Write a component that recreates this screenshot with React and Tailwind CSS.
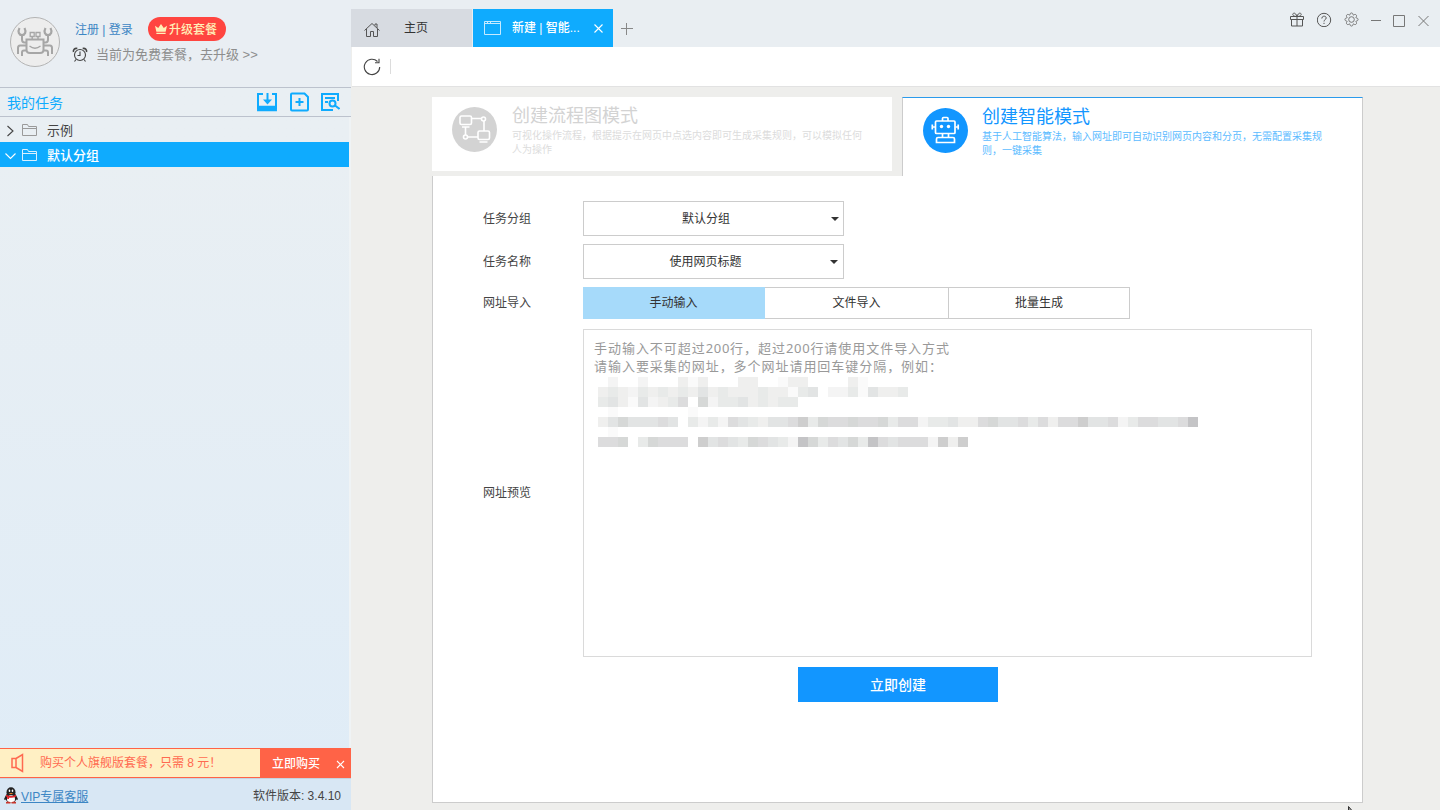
import React, { useState } from 'react';

const GREYS = {
  a: '#fafafa', b: '#f4f4f4', c: '#efefee', d: '#e8eae9', e: '#e2e4e4',
  f: '#dcdcdd', g: '#d6d8d7', h: '#cecece', i: '#c4c4c6',
};

// one letter per 10px block, a dot is an empty block
const MOSAIC = [
  '.b..b...cac...cc..acc....ca',
  'cdcbdcdcdcecdcccdccade.bbdaeccd',
  'decaebcdf.gbddecdcdd',
  '.a.......a',
  'cegeeefe.dbdbfedceefhdgffgffgdffbddeccfgeefdfcffheefbdffeefi',
  '.a',
  'ffg.dgfff.hefedgfedbigdfegdifefffbhch',
];

const TASKS = [
  { id: 1, name: '示例' },
  { id: 2, name: '默认分组' },
];

const SOURCES = [
  { name: '手动输入', width: 'w-[182px]' },
  { name: '文件导入', width: 'w-[184px]' },
  { name: '批量生成', width: 'w-[181px]' },
];

function Crab() {
  return (
    <svg width="50" height="50" viewBox="0 0 50 50" fill="none" stroke="#a6a6a6" strokeWidth="2">
      <circle cx="25" cy="25" r="24.5" fill="#ededed" stroke="#b3b3b3" strokeWidth="1" />
      <path d="M16.500 22.500h17v10q0 3.500-3.500 3.500h-10q-3.500 0-3.500-3.500z" />
      <path d="M16.500 25.500h-2q-2.500 0-2.500-3v-4M33.500 25.500h2q2.500 0 2.500-3v-4" />
      <path d="M9.500 11c-2 4-.5 7 2.500 7s4.500-3 2.500-7M35.500 11c-2 4-.5 7 2.500 7s4.500-3 2.500-7" strokeWidth="2.200" />
      <path d="M16.500 28.500H10q-2 0-2 2.500v6M16.500 33.500H14q-2 0-2 2v3.500M33.500 28.500H40q2 0 2 2.500v6M33.500 33.500H36q2 0 2 2v3.500" />
      <path d="M20.200 15.500h4v4h-4zM26 15.500h4v4h-4z" strokeWidth="1.300" />
      <path d="M22.200 19.500v3M28 19.500v3" strokeWidth="1.500" />
      <path d="M19.500 29q5.500 4.500 11 0" strokeWidth="1.300" />
    </svg>
  );
}

function AlarmIcon() {
  return (
    <svg width="16" height="16" viewBox="0 0 16 16" fill="none" stroke="#444" strokeWidth="1.1">
      <circle cx="8" cy="8" r="5.500" />
      <path d="M8 4.500v4H5.500M4 12.500l-1.500 2M12 12.500l1.500 2" />
      <path d="M1.500 5C.9 2.600 2.900.8 5.300 1.500M14.500 5c.6-2.400-1.400-4.200-3.800-3.500" strokeWidth="1.600" />
    </svg>
  );
}

function Folder({ color }) {
  return (
    <svg width="16" height="14" viewBox="0 0 16 14" fill="none" stroke={color}>
      <path d="M.5 12.500v-11h5l1 2h8v9zM.5 5.500h14" />
    </svg>
  );
}

function TaskToolbar() {
  return (
    <div className="flex items-center gap-3 text-[#0fabfe]">
      <svg width="21" height="20" viewBox="0 0 21 20" fill="none" stroke="currentColor" strokeWidth="2">
        <path d="M6 2H1v15M15 2h4v15" />
        <path d="M.800 14.500h18.400v4H.800z" fill="currentColor" strokeWidth="1.500" />
        <path d="M10.500 1v9" />
        <path d="M6 7.500h9l-4.500 5z" fill="currentColor" stroke="none" />
      </svg>
      <svg width="19" height="20" viewBox="0 0 19 20" fill="none" stroke="currentColor" strokeWidth="2">
        <path d="M2 1.500h12.500l3.500 3.500v12.500q0 1-1 1h-15q-1 0-1-1v-15q0-1 1-1zM9.500 6v8M5.500 10h8" />
      </svg>
      <svg width="19" height="20" viewBox="0 0 19 20" fill="none" stroke="currentColor" strokeWidth="2">
        <path d="M12 18H1V2h16v7M4 6h10M4 10h3" />
        <circle cx="11.500" cy="11.500" r="3" />
        <path d="M14 13.500l4.500 3.500" />
      </svg>
    </div>
  );
}

function Sidebar() {
  const [selected, setSelected] = useState(2);

  return (
    <aside className="flex w-[351px] shrink-0 flex-col bg-linear-to-b from-[#e9eff3] from-20% to-[#dfecf7]">
      <div className="flex h-[87px] gap-3 bg-[#e9eef3] pl-[10px] pt-[17px]">
        <Crab />
        <div>
          <div className="flex h-6 items-center text-[12px] text-[#3c86c4]">
            <span className="w-[76px] pl-[3px] pt-px">注册 | 登录</span>
            <span className="flex h-6 w-[78px] items-center gap-[2px] rounded-full bg-[#ff4540] pl-[7px] text-[12px] font-medium text-[#fff0b8]">
              <svg className="-mt-px" width="12" height="12" viewBox="0 0 13 12" fill="currentColor">
                <path d="M0 2.500l3.500 2.500L6.500.5l3 4.500L13 2.500 11.500 9h-10zM1.500 10h10v1.500h-10z" />
              </svg>
              <span className="pt-px">升级套餐</span>
            </span>
          </div>
          <div className="mt-[3px] flex items-center gap-2 text-[13px] leading-5 text-[#8d8d8d]">
            <AlarmIcon />
            <span className="whitespace-nowrap pt-px">当前为免费套餐，去升级 &gt;&gt;</span>
          </div>
        </div>
      </div>

      <div className="flex h-[30px] items-center justify-between border-y border-[#bcc2cd] pl-[7px] pr-[11px]">
        <span className="pt-[2px] text-[14px] text-[#0fabfe]">我的任务</span>
        <TaskToolbar />
      </div>

      <div className="flex-1 border-r-2 border-[#eff3f5]">
        {TASKS.map(task => (
          <div
            key={task.id}
            onClick={() => setSelected(task.id)}
            className={`flex h-[25px] items-center text-[13px] ${
              selected === task.id ? 'bg-[#0fabfe] font-medium text-white' : 'text-[#444]'
            }`}
          >
            <svg className="ml-[5px] mr-[5px] mt-[2px]" width="12" height="12" viewBox="0 0 12 12" fill="none" stroke="currentColor" strokeWidth="1.100">
              {selected === task.id ? <path d="M.5 3.500L5.500 8.500l5-5" /> : <path d="M2.500 1l5.500 5-5.500 5" />}
            </svg>
            <Folder color={selected === task.id ? '#d8f0ff' : '#9a9a9a'} />
            <span className="ml-[9px] pt-[2px]">{task.name}</span>
          </div>
        ))}
      </div>

      <div className="flex h-[30px] items-stretch border-y border-[#ff6347] bg-[#fff0c4] text-[12px]">
        <div className="flex w-[260px] items-center text-[#ff6a50]">
          <svg className="ml-[11px] mr-[16px]" width="13" height="20" viewBox="0 0 13 20" fill="none" stroke="currentColor" strokeWidth="1.500">
            <path d="M1 5.500h4v9H1zM5 5.500L11.500 1.500v17L5 14.500" />
          </svg>
          <span>购买个人旗舰版套餐，只需 8 元！</span>
        </div>
        <div className="flex flex-1 items-center justify-between bg-[#ff6347] pl-3 pr-[6px] font-medium text-white">
          <span className="pt-px">立即购买</span>
          <svg className="mt-[2px]" width="9" height="9" viewBox="0 0 9 9" stroke="currentColor" strokeWidth="1.100">
            <path d="M1 1l7 7M8 1L1 8" />
          </svg>
        </div>
      </div>

      <div className="flex h-8 items-center justify-between border-t border-[#c5d3e0] bg-[#d8e7f4] pl-1 pr-[10px] pt-[3px] text-[12px] text-[#444]">
        <div className="flex items-center gap-[3px]">
          <svg className="-mt-px" width="14" height="17" viewBox="0 0 14 17">
            <path d="M2.500 7.500L.2 11.500q0 2 1 1.500L3 11zM11.500 7.500l2.300 4q0 2-1 1.500L11 11z" fill="#222" />
            <ellipse cx="7" cy="10.500" rx="5.500" ry="5.500" fill="#222" />
            <ellipse cx="7" cy="5.200" rx="4.500" ry="5" fill="#222" />
            <ellipse cx="7" cy="12" rx="4" ry="3.800" fill="#fff" />
            <path d="M2.200 7.800q4.800 2.500 9.600 0l.3 1.700q-5 2.500-10.200 0zM3 9h2v3H3.300z" fill="#e1252b" />
            <ellipse cx="5.500" cy="3.800" rx=".8" ry="1.200" fill="#fff" />
            <ellipse cx="8.500" cy="3.800" rx=".8" ry="1.200" fill="#fff" />
            <path d="M4.500 6h5L7 7.300z" fill="#ee8322" />
            <path d="M2 15q2.500-1 4.500.3V16.500H2zM12 15q-2.500-1-4.500.3V16.500H12z" fill="#c9352b" />
          </svg>
          <span className="pt-px text-[#3c86c4] underline">VIP专属客服</span>
        </div>
        <span>软件版本: 3.4.10</span>
      </div>
    </aside>
  );
}

function TabBar() {
  return (
    <div className="flex h-[47px] items-start justify-between bg-[#e9eef2]">
      <div className="flex pt-[9px]">
        <div className="mr-px flex h-[38px] w-[121px] items-center bg-[#d7dbe1] text-[12px] text-[#333]">
          <svg className="ml-[13px] mr-[24px] mt-[3px]" width="16" height="16" viewBox="0 0 16 16" fill="none" stroke="#555">
            <path d="M.5 8.500L8 1.500l7.500 7M2.500 7v7.500h4v-5h3v5h4V7M11 3.500V2h2v4" />
          </svg>
          <span>主页</span>
        </div>
        <div className="flex h-[38px] w-[140px] items-center bg-[#0fabfe] text-[12px] font-medium text-white">
          <svg className="ml-[11px] mr-[11px]" width="17" height="14" viewBox="0 0 17 14" fill="none" stroke="#c5eaff">
            <path d="M.5.5h16v13H.5zM.5 2.500h16M3.500 1v2M6.500 1v2" />
          </svg>
          <span className="w-[82px] whitespace-nowrap">新建 | 智能...</span>
          <svg width="9" height="9" viewBox="0 0 9 9" stroke="currentColor" strokeWidth="1.100">
            <path d="M.5.5l8 8M8.500.5l-8 8" />
          </svg>
        </div>
        <svg className="ml-2 mt-[14px]" width="12" height="12" viewBox="0 0 12 12" stroke="#888">
          <path d="M0 5.500h12M5.500 0v12" />
        </svg>
      </div>

      <div className="flex items-center gap-3 pr-[9px] pt-3 text-[#555]">
        <svg width="15" height="15" viewBox="0 0 15 15" fill="none" stroke="currentColor">
          <path d="M.5 4.500h13v3H.5zM1.500 7.500h11v6.500h-11zM7 4.500v9.500M7 4.500C4.500 4.500 2 3.500 3 1.800s3.300 0 4 2.700c.7-2.700 3-4.400 4-2.700s-1.500 2.700-4 2.700" />
        </svg>
        <svg width="15" height="15" viewBox="0 0 15 15" fill="none" stroke="currentColor">
          <circle cx="7" cy="8" r="6.700" />
          <path d="M4.800 6.500c0-3 4.400-3 4.400-.5 0 1.700-2.200 1.500-2.200 3.500M7 10.800v1.200" />
        </svg>
        <svg width="15" height="15" viewBox="0 0 24 24" fill="none" stroke="#777" strokeWidth="1.600">
          <circle cx="12" cy="12" r="4.500" />
          <path d="M9.500 4.500C9.500.5 14.500.5 14.500 4.500L15.540 4.930C18.360 2.100 21.900 5.640 19.070 8.460L19.500 9.500C23.500 9.500 23.500 14.500 19.500 14.500L19.070 15.540C21.900 18.360 18.360 21.900 15.540 19.070L14.500 19.500C14.500 23.500 9.500 23.500 9.500 19.500L8.460 19.070C5.640 21.900 2.100 18.360 4.930 15.540L4.500 14.500C.5 14.500.5 9.500 4.500 9.500L4.930 8.460C2.100 5.640 5.640 2.100 8.460 4.930Z" />
        </svg>
        <svg width="10" height="15" viewBox="0 0 10 15" stroke="#777">
          <path d="M0 8.500h10" />
        </svg>
        <svg width="13" height="15" viewBox="0 0 13 15" fill="none" stroke="#777">
          <path d="M.5 3.500h11v11H.5z" />
        </svg>
        <svg width="13" height="15" viewBox="0 0 13 15" fill="none" stroke="#777">
          <path d="M.5 4l10 10M10.500 4L.5 14" />
        </svg>
      </div>
    </div>
  );
}

function FlowIcon() {
  return (
    <svg className="shrink-0" width="45" height="45" viewBox="0 0 45 45" fill="none" stroke="#fff" strokeWidth="1.600">
      <circle cx="22.500" cy="22.500" r="22.500" fill="#d3d3d3" stroke="none" />
      <rect x="8" y="9" width="11.500" height="8.500" rx="1.500" />
      <rect x="26" y="24" width="11.500" height="8.500" rx="1.500" />
      <circle cx="31.500" cy="12" r="2" />
      <circle cx="13.500" cy="30" r="2" />
      <path d="M19.500 11.500h10M32 14v10M13.500 20v8M15.500 30H26M10 20h7.500M27.500 35h8" />
    </svg>
  );
}

function RobotIcon() {
  return (
    <svg className="shrink-0" width="45" height="45" viewBox="0 0 45 45" fill="none" stroke="#fff" strokeWidth="1.700">
      <circle cx="22.500" cy="22.500" r="22.500" fill="#1296ff" stroke="none" />
      <rect x="12.500" y="13" width="19.500" height="12.500" rx="1" />
      <path d="M19.500 13v-2.500q0-1 1-1h3.500q1 0 1 1V13M9.300 16.500v5M12 19H9.300M35.200 16.500v5M32.500 19h2.700M19.500 26v3M25.500 26v3" />
      <path d="M13.500 34.500v-3.500q0-1.500 1.500-1.500h15q1.500 0 1.500 1.500v3.500z" />
      <circle cx="18.500" cy="18.500" r="1.700" fill="#fff" stroke="none" />
      <circle cx="25.500" cy="18.500" r="1.700" fill="#fff" stroke="none" />
    </svg>
  );
}

function Row({ label, children, className }) {
  return (
    <div className={`flex ${className}`}>
      <div className="flex w-[100px] items-center text-[12px] text-[#444]">{label}</div>
      {children}
    </div>
  );
}

function SelectBox({ value, arrowClass }) {
  return (
    <div className="flex h-[35px] w-[261px] items-center border border-[#ccc] text-[12px] text-[#333]">
      <span className="flex-1 pr-[3px] text-center">{value}</span>
      <svg className={arrowClass} width="8" height="4" viewBox="0 0 8 4" fill="#333">
        <path d="M0 0h8L4 4z" />
      </svg>
    </div>
  );
}

function UrlBox() {
  return (
    <div className="h-[328px] w-[729px] border border-[#dadada] pl-[10px] pt-[9px] font-['Noto_Sans','Noto_Sans_CJK_SC',sans-serif] text-[13px] leading-[18px] tracking-[0.96px] text-[#999]">
      <p>手动输入不可超过<span className="tracking-[0.7px]">200</span>行，超过<span className="tracking-[0.7px]">200</span>行请使用文件导入方式</p>
      <p>请输入要采集的网址，多个网址请用回车键分隔，例如：</p>
      <div className="ml-[4px] mt-[2px]">
        {MOSAIC.map((line, y) => (
          <div key={y} className="flex h-[10px]">
            {line.split('').map((c, x) => (
              <div key={x} className="h-[10px] w-[10px]" style={{ backgroundColor: GREYS[c] }} />
            ))}
          </div>
        ))}
      </div>
    </div>
  );
}

function App() {
  const [source, setSource] = useState(0);

  return (
    <div className="relative flex h-[810px] w-[1440px] overflow-hidden bg-[#eeeeec] font-['Liberation_Sans','Noto_Sans_CJK_SC',sans-serif]">
      <Sidebar />

      <main className="flex flex-1 flex-col">
        <TabBar />

        {/* Page toolbar */}
        <div className="ml-px flex h-10 items-center border-b border-[#e2e2e2] bg-white">
          <svg className="ml-[11px]" width="18" height="18" viewBox="0 0 18 18" fill="none" stroke="#444" strokeWidth="1.100">
            <path d="M14.500 3.500A7.700 7.700 0 1 0 16.700 9M16 .8v4h-4" />
          </svg>
          <div className="ml-[9px] h-[15px] w-px bg-[#dcdcdc]" />
        </div>

        <div className="pl-[81px] pt-[10px]">
          {/* Mode cards */}
          <div className="flex h-[79px] w-[931px] justify-between">
            <div className="flex h-[74px] w-[460px] bg-white pl-5 pt-[10px]">
              <FlowIcon />
              <div className="-mt-[3px] ml-[15px] w-[352px]">
                <h2 className="text-[18px] leading-6 text-[#d3d3d3]">创建流程图模式</h2>
                <p className="pt-px text-[10px] leading-[14px] text-[#dcdcdc]">
                  可视化操作流程，根据提示在网页中点选内容即可生成采集规则，可以模拟任何人为操作
                </p>
              </div>
            </div>
            <div className="flex w-[461px] border-x border-t border-x-[#ccc] border-t-[#2b9bec] bg-white pl-5 pt-[10px]">
              <RobotIcon />
              <div className="-mt-[3px] ml-[14px] w-[345px]">
                <h2 className="text-[18px] leading-6 text-[#1296ff]">创建智能模式</h2>
                <p className="pt-px text-[10px] leading-[14px] text-[#5cbbff]">
                  基于人工智能算法，输入网址即可自动识别网页内容和分页，无需配置采集规则，一键采集
                </p>
              </div>
            </div>
          </div>

          {/* Task form */}
          <div className="h-[627px] w-[931px] border-x border-b border-[#ccc] bg-white pl-[50px] pt-[25px]">
            <Row label="任务分组" className="h-[35px]">
              <SelectBox value="默认分组" arrowClass="mr-[4px]" />
            </Row>
            <Row label="任务名称" className="mt-2 h-[35px]">
              <SelectBox value="使用网页标题" arrowClass="mr-[5px]" />
            </Row>
            <Row label="网址导入" className="mt-2 h-8">
              <div className="flex text-[12px] text-[#333]">
                {SOURCES.map(({ name, width }, i) => (
                  <button
                    key={name}
                    onClick={() => setSource(i)}
                    className={`border-y border-r ${width} ${
                      source === i ? 'border-[#a6dafa] bg-[#a6dafa]' : 'border-[#ccc] bg-white'
                    }`}
                  >
                    {name}
                  </button>
                ))}
              </div>
            </Row>
            <Row label="网址预览" className="mt-[10px] h-[328px]">
              <UrlBox />
            </Row>
            <button className="ml-[315px] mt-[10px] block h-[35px] w-[200px] bg-[#1296ff] pt-[2px] text-[14px] font-medium text-white">
              立即创建
            </button>
          </div>
        </div>
      </main>

      <svg className="absolute left-[1348px] top-[806px]" width="8" height="12" viewBox="0 0 8 12">
        <path d="M.5.5v10l2.500-2.500h4z" fill="#999" stroke="#333" />
      </svg>
    </div>
  );
}

export default App;
